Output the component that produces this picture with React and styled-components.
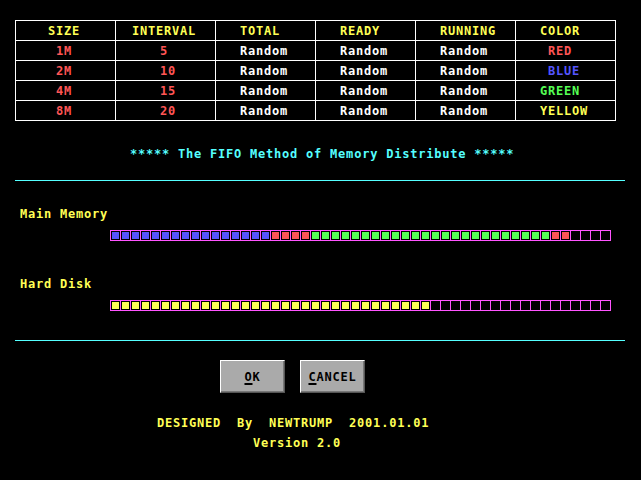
import React from 'react';
import styled, { createGlobalStyle } from 'styled-components';

const GlobalStyle = createGlobalStyle`
  html, body {
    margin: 0;
    padding: 0;
    background: #000;
  }
  body {
    font-family: 'DejaVu Sans Mono', 'Liberation Mono', monospace;
    font-weight: bold;
    font-size: 12px;
    letter-spacing: 0.78px;
  }
`;

const EGA = {
  white: '#ffffff',
  yellow: '#ffff55',
  red: '#ff5555',
  blue: '#5555ff',
  green: '#55ff55',
  magenta: '#ff55ff',
  cyan: '#55ffff',
  gray: '#aaaaaa',
};

const headers = [
  { text: 'SIZE', pad: 32 },
  { text: 'INTERVAL', pad: 16 },
  { text: 'TOTAL', pad: 24 },
  { text: 'READY', pad: 24 },
  { text: 'RUNNING', pad: 24 },
  { text: 'COLOR', pad: 24 },
];

const rows = [
  { size: '1M', interval: '5', color: 'RED', c: EGA.red, cpad: 32 },
  { size: '2M', interval: '10', color: 'BLUE', c: EGA.blue, cpad: 32 },
  { size: '4M', interval: '15', color: 'GREEN', c: EGA.green, cpad: 24 },
  { size: '8M', interval: '20', color: 'YELLOW', c: EGA.yellow, cpad: 24 },
];

// memory blocks, in order, left to right
const memory = [
  ...Array(16).fill(EGA.blue),
  ...Array(4).fill(EGA.red),
  ...Array(24).fill(EGA.green),
  ...Array(2).fill(EGA.red),
  ...Array(4).fill(null),
];
const disk = [...Array(32).fill(EGA.yellow), ...Array(18).fill(null)];

const Screen = styled.div`
  width: 641px;
  height: 480px;
  padding: 20px 0 0 15px;
  box-sizing: border-box;
  background: #000;
  overflow: hidden;
`;

const Table = styled.div`
  display: grid;
  grid-template-columns: repeat(6, 99px);
  grid-auto-rows: 19px;
  gap: 1px;
  padding: 1px;
  width: 601px;
  box-sizing: border-box;
  background: ${EGA.white};
`;

const Cell = styled.div`
  background: #000;
  color: ${(p) => p.$color};
  padding-left: ${(p) => p.$pad}px;
  display: flex;
  align-items: center;
  line-height: 1;
  white-space: pre;
`;

const Line = styled.div`
  line-height: 16px;
  height: 16px;
  white-space: pre;
  color: ${(p) => p.$color};
  margin-top: ${(p) => p.$top}px;
  margin-left: ${(p) => p.$left}px;
`;

const Rule = styled.div`
  width: 610px;
  height: 1px;
  background: ${EGA.cyan};
  margin-top: ${(p) => p.$top}px;
`;

const Bar = styled.div`
  display: flex;
  width: max-content;
  margin-left: 95px;
  margin-top: ${(p) => p.$top}px;
  border: 1px solid ${EGA.magenta};
  border-right: none;
`;

const Slot = styled.div`
  width: 10px;
  height: 9px;
  padding: 1px;
  box-sizing: border-box;
  border-right: 1px solid ${EGA.magenta};
`;

const Fill = styled.div`
  width: 7px;
  height: 7px;
  background: ${(p) => p.$color || 'transparent'};
`;

const Buttons = styled.div`
  display: flex;
  gap: 15px;
  margin: 19px 0 0 205px;
`;

const Button = styled.button`
  width: 65px;
  height: 33px;
  padding: 0;
  background: ${EGA.gray};
  color: #000;
  font: inherit;
  letter-spacing: inherit;
  border: 1px solid;
  border-color: #fff #555 #555 #fff;
  box-shadow: inset -1px -1px 0 #777;
  u {
    text-decoration-thickness: 2px;
    text-underline-offset: 2px;
  }
`;

const MemoryBar = ({ blocks, top }) => (
  <Bar $top={top}>
    {blocks.map((c, i) => (
      <Slot key={i}>
        <Fill $color={c} />
      </Slot>
    ))}
  </Bar>
);

export default function App() {
  return (
    <>
      <GlobalStyle />
      <Screen>
        <Table>
          {headers.map((h) => (
            <Cell key={h.text} $color={EGA.yellow} $pad={h.pad}>
              {h.text}
            </Cell>
          ))}
          {rows.map((r) => (
            <React.Fragment key={r.size}>
              <Cell $color={EGA.red} $pad={40}>{r.size}</Cell>
              <Cell $color={EGA.red} $pad={44}>{r.interval}</Cell>
              <Cell $color={EGA.white} $pad={24}>Random</Cell>
              <Cell $color={EGA.white} $pad={24}>Random</Cell>
              <Cell $color={EGA.white} $pad={24}>Random</Cell>
              <Cell $color={r.c} $pad={r.cpad}>{r.color}</Cell>
            </React.Fragment>
          ))}
        </Table>

        <Line $color={EGA.cyan} $top={25} $left={115}>
          ***** The FIFO Method of Memory Distribute *****
        </Line>
        <Rule $top={18} />

        <Line $color={EGA.yellow} $top={25} $left={5}>Main Memory</Line>
        <MemoryBar blocks={memory} top={8} />

        <Line $color={EGA.yellow} $top={35} $left={5}>Hard Disk</Line>
        <MemoryBar blocks={disk} top={8} />

        <Rule $top={29} />

        <Buttons>
          <Button><u>O</u>K</Button>
          <Button><u>C</u>ANCEL</Button>
        </Buttons>

        <Line $color={EGA.yellow} $top={22} $left={142}>
          DESIGNED  By  NEWTRUMP  2001.01.01
        </Line>
        <Line $color={EGA.yellow} $top={4} $left={238}>Version 2.0</Line>
      </Screen>
    </>
  );
}
